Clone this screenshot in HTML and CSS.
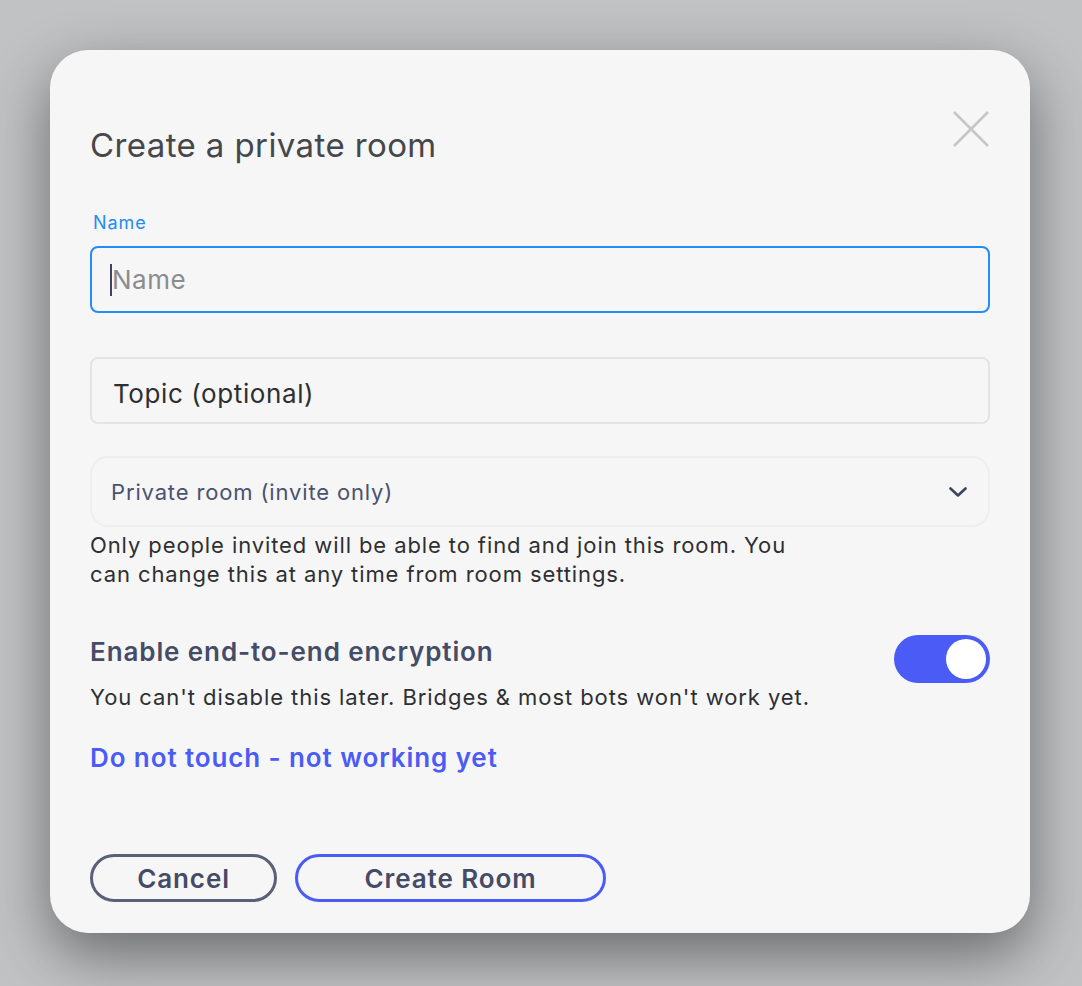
FILE: index.html
```html
<!DOCTYPE html>
<html lang="en">
<head>
<meta charset="utf-8">
<title>Create a private room</title>
<link rel="stylesheet" href="styles.css">
</head>
<body>
<div class="backdrop">
  <div class="dialog">
    <div class="header">
      <h1 class="title">Create a private room</h1>
      <button class="close" aria-label="Close">
        <svg width="38" height="38" viewBox="0 0 38 38"><path d="M2 2 L36 36 M36 2 L2 36" stroke="#c6c6c6" stroke-width="2.6" fill="none"/></svg>
      </button>
    </div>

    <div class="field field-name">
      <label class="field-label">Name</label>
      <div class="input focused"><span class="caret"></span><span class="placeholder">Name</span></div>
    </div>

    <div class="field field-topic">
      <div class="input plain"><span class="value">Topic (optional)</span></div>
    </div>

    <div class="select">
      <span class="select-text">Private room (invite only)</span>
      <svg class="chevron" width="18" height="11" viewBox="0 0 18 11"><path d="M1.5 1.5 L9 8.5 L16.5 1.5" stroke="#3d4462" stroke-width="2.6" fill="none" stroke-linecap="round" stroke-linejoin="round"/></svg>
    </div>
    <p class="help">Only people invited will be able to find and join this room. You can change this at any time from room settings.</p>

    <div class="toggle-row">
      <div class="toggle-text">
        <div class="toggle-title">Enable end-to-end encryption</div>
        <div class="toggle-desc">You can't disable this later. Bridges &amp; most bots won't work yet.</div>
      </div>
      <div class="switch"><span class="knob"></span></div>
    </div>

    <a class="warn-link">Do not touch - not working yet</a>

    <div class="buttons">
      <button class="btn btn-cancel">Cancel</button>
      <button class="btn btn-create">Create Room</button>
    </div>
  </div>
</div>
</body>
</html>
```

FILE: styles.css
```css
* { box-sizing: border-box; }
html, body {
  margin: 0;
  padding: 0;
  width: 1082px;
  height: 986px;
  overflow: hidden;
}
body {
  background: #c1c2c4;
  font-family: Inter, "Noto Sans", sans-serif;
}
.backdrop {
  padding: 50px 52px 0 50px;
}
.dialog {
  width: 980px;
  height: 883px;
  background: #f6f6f6;
  border-radius: 38px;
  box-shadow: 0 22px 60px rgba(0, 0, 0, 0.45);
  padding: 60px 40px 0 40px;
  display: flex;
  flex-direction: column;
}
.header {
  display: flex;
  justify-content: space-between;
  align-items: flex-start;
}
.title {
  margin: 15px 0 0 0;
  font-size: 33px;
  line-height: 40px;
  letter-spacing: 0.4px;
  font-weight: 400;
  color: #45474b;
}
.close {
  border: 0;
  background: none;
  padding: 0;
  width: 38px;
  height: 38px;
}
.close svg { display: block; }
.field-name { margin-top: 48px; }
.field-label {
  display: block;
  font-size: 18px;
  line-height: 20px;
  letter-spacing: 0.9px;
  color: #238cf5;
  margin-left: 3px;
  margin-bottom: 13px;
}
.input {
  height: 67px;
  border-radius: 8px;
  display: flex;
  align-items: center;
  padding-left: 18px;
  font-size: 26px;
  letter-spacing: 0.5px;
}
.input.focused {
  border: 2px solid #238cf5;
}
.caret {
  width: 2px;
  height: 32px;
  background: #3d4462;
}
.placeholder { color: #8c8c8c; }
.field-topic { margin-top: 44px; }
.input.plain {
  border: 2px solid #e4e4e4;
  padding-left: 21px;
  padding-top: 5px;
  letter-spacing: 0.6px;
}
.value { color: #2e2f32; }
.select {
  margin-top: 32px;
  height: 71px;
  border: 2px solid #eeeeee;
  border-radius: 18px;
  display: flex;
  align-items: center;
  justify-content: space-between;
  padding: 0 21px 0 19px;
}
.select-text {
  font-size: 22px;
  letter-spacing: 0.85px;
  color: #4a5270;
}
.chevron { display: block; margin-top: 2px; }
.help {
  margin: 4px 0 0 0;
  max-width: 715px;
  font-size: 22px;
  line-height: 29px;
  letter-spacing: 0.9px;
  color: #2e2f32;
}
.toggle-row {
  margin-top: 48px;
  display: flex;
  justify-content: space-between;
  align-items: flex-start;
}
.toggle-title {
  font-size: 26px;
  line-height: 30px;
  letter-spacing: 0.9px;
  font-weight: 600;
  color: #454c68;
}
.toggle-desc {
  margin-top: 16px;
  font-size: 22px;
  line-height: 28px;
  letter-spacing: 0.93px;
  color: #2e2f32;
}
.switch {
  width: 96px;
  height: 48px;
  border-radius: 24px;
  background: #4a5cf5;
  display: flex;
  align-items: center;
  justify-content: flex-end;
  padding-right: 4px;
  margin-top: -2px;
}
.knob {
  width: 40px;
  height: 40px;
  border-radius: 50%;
  background: #ffffff;
}
.warn-link {
  margin-top: 30px;
  font-size: 26px;
  line-height: 34px;
  letter-spacing: 0.9px;
  font-weight: 600;
  color: #4a5cf5;
  align-self: flex-start;
}
.buttons {
  margin-top: 79px;
  display: flex;
  gap: 18px;
}
.btn {
  height: 48px;
  border-radius: 24px;
  background: transparent;
  font-family: Inter, "Noto Sans", sans-serif;
  font-size: 26px;
  letter-spacing: 0.9px;
  font-weight: 600;
  color: #454b66;
  padding: 0;
}
.btn-cancel {
  width: 187px;
  border: 3px solid #5a6078;
}
.btn-create {
  width: 311px;
  border: 3px solid #4a5cf5;
}
```
